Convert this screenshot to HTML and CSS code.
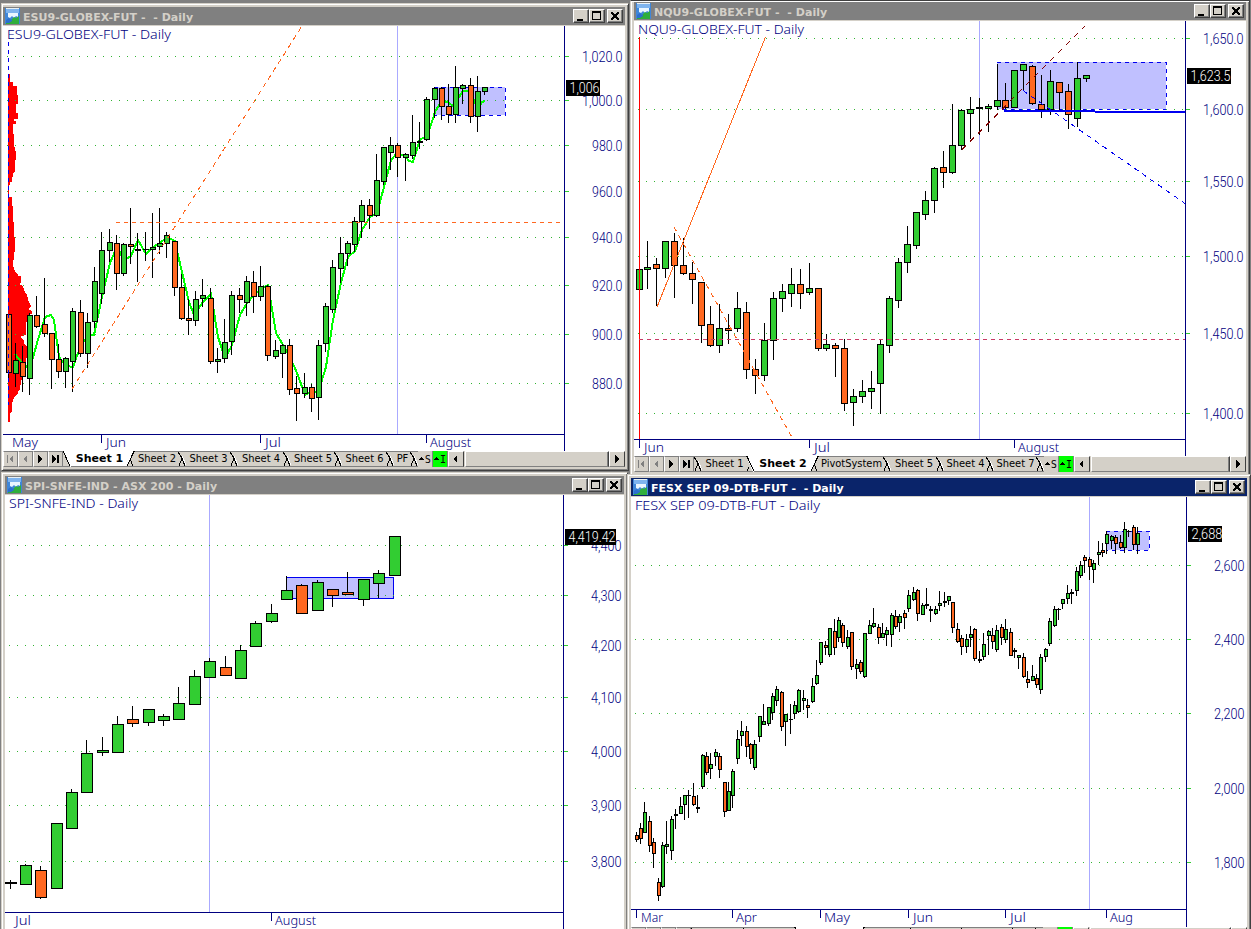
FILE: index.html
```
<!DOCTYPE html>
<html lang="en">
<head>
    <meta charset="UTF-8">
    <meta name="viewport" content="width=device-width, initial-scale=1.0">
    <title>Charts</title>
    <link rel="stylesheet" href="styles.css">
</head>
<body>
    <svg class="defs" width="0" height="0">
        <symbol id="chartIcon" viewBox="0 0 15 16">
            <rect x="0" y="0" width="15" height="16" fill="#3f86d8"/>
            <rect x="1" y="1" width="13" height="4" fill="#7fb4ee"/>
            <path d="M3 5H13V9L11 8L9 10L7 8L5 10L3 9Z" fill="#eaf6ff"/>
            <path d="M1 16V13L4 11L6 12L9 9L11 10L14 8V16Z" fill="#2fae3c"/>
            <path d="M1 12L4 10L6 12L7 11V13L4 15H1Z" fill="#2b6fd0"/>
            <path d="M1 0H14V1H1Z" fill="#e8f0f4"/>
        </symbol>
        <symbol id="minIcon" viewBox="0 0 12 10"><rect x="2" y="8" width="6" height="2"/></symbol>
        <symbol id="maxIcon" viewBox="0 0 12 10"><path d="M1 0H10V9H1ZM2 2V8H9V2Z" fill-rule="evenodd"/></symbol>
        <symbol id="closeIcon" viewBox="0 0 12 10"><path d="M2 1H4L6 3.4L8 1H10V2L7.2 5L10 8V9H8L6 6.6L4 9H2V8L4.8 5L2 2Z"/></symbol>
    </svg>

    <div class="window es">
        <div class="titleBar">
            <svg class="appIcon"><use href="#chartIcon"/></svg>
            <span class="title">ESU9-GLOBEX-FUT -  - Daily</span>
            <button><svg><use href="#minIcon"/></svg></button>
            <button><svg><use href="#maxIcon"/></svg></button>
            <button class="close"><svg><use href="#closeIcon"/></svg></button>
        </div>
        <svg class="chart" id="es"></svg>
        <div class="sheets" id="esSheets"></div>
    </div>

    <div class="window nq">
        <div class="titleBar">
            <svg class="appIcon"><use href="#chartIcon"/></svg>
            <span class="title">NQU9-GLOBEX-FUT -  - Daily</span>
            <button><svg><use href="#minIcon"/></svg></button>
            <button><svg><use href="#maxIcon"/></svg></button>
            <button class="close"><svg><use href="#closeIcon"/></svg></button>
        </div>
        <svg class="chart" id="nq"></svg>
        <div class="sheets" id="nqSheets"></div>
    </div>

    <div class="window spi">
        <div class="titleBar">
            <svg class="appIcon"><use href="#chartIcon"/></svg>
            <span class="title">SPI-SNFE-IND - ASX 200 - Daily</span>
            <button><svg><use href="#minIcon"/></svg></button>
            <button><svg><use href="#maxIcon"/></svg></button>
            <button class="close"><svg><use href="#closeIcon"/></svg></button>
        </div>
        <svg class="chart" id="spi"></svg>
    </div>

    <div class="window fesx active">
        <div class="titleBar">
            <svg class="appIcon"><use href="#chartIcon"/></svg>
            <span class="title">FESX SEP 09-DTB-FUT -  - Daily</span>
            <button><svg><use href="#minIcon"/></svg></button>
            <button><svg><use href="#maxIcon"/></svg></button>
            <button class="close"><svg><use href="#closeIcon"/></svg></button>
        </div>
        <svg class="chart" id="fesx"></svg>
        <div class="sheets" id="fesxSheets"></div>
    </div>

    <script src="charts.js"></script>
</body>
</html>
```
FILE: styles.css
```
body
{
    margin: 0;
    width: 1251px;
    height: 929px;
    position: relative;
    overflow: hidden;
    background: #808080;
    font-family: "DejaVu Sans Condensed", "DejaVu Sans", sans-serif;
    font-size: 11px;
}
.defs
{
    position: absolute;
}
.window
{
    position: absolute;
    box-sizing: border-box;
    display: flex;
    flex-direction: column;
    background: #d4d0c8;
    border: 1px solid;
    border-color: #d4d0c8 #404040 #404040 #d4d0c8;
    box-shadow: inset 1px 1px #fff, inset -1px -1px #808080;
    padding: 3px;
}
.es
{
    left: 1px;
    top: 3px;
    width: 628px;
    height: 468px;
    padding-left: 1px;
}
.nq
{
    left: 630px;
    top: 0;
    width: 620px;
    height: 476px;
    padding-top: 1px;
    border-top-color: #404040;
}
.spi
{
    left: 1px;
    top: 472px;
    width: 627px;
    height: 470px;
}
.fesx
{
    left: 627px;
    top: 474px;
    width: 624px;
    height: 473px;
}
.titleBar
{
    height: 18px;
    flex: none;
    display: flex;
    align-items: center;
    padding: 0 2px;
    background: #808080;
    color: #d4d0c8;
    border-bottom: 1px solid #d4d0c8;
}
.active .titleBar
{
    background: #0a246a;
    color: #fff;
}
.appIcon
{
    width: 15px;
    height: 16px;
    margin-right: 3px;
}
.title
{
    flex: 1;
    white-space: pre;
    font: bold 11px "DejaVu Sans", sans-serif;
    letter-spacing: 0.03px;
    position: relative;
    top: 1px;
}
button
{
    box-sizing: border-box;
    width: 16px;
    height: 14px;
    padding: 0;
    border: 1px solid;
    border-color: #fff #404040 #404040 #fff;
    box-shadow: inset -1px -1px #808080;
    background: #d4d0c8;
    display: flex;
    align-items: center;
    justify-content: center;
    border-radius: 0;
}
button svg
{
    width: 12px;
    height: 10px;
    shape-rendering: crispEdges;
}
.close
{
    margin-left: 2px;
}
.chart
{
    display: block;
    flex: none;
    background: #fff;
    shape-rendering: crispEdges;
}
.chart text
{
    font-family: "Noto Sans", sans-serif;
    font-weight: 300;
    font-size: 13.5px;
    fill: #000080;
}
.chart .price
{
    font-family: Roboto, sans-serif;
    font-size: 14.5px;
}
.chart .tagText
{
    fill: #fff;
}
.axis
{
    stroke: #000080;
}
.tick
{
    stroke: #32cd32;
}
.grid
{
    stroke: #32b432;
    stroke-dasharray: 1 7;
}
.cursor
{
    stroke: #aaaaff;
}
.zone
{
    fill: #c0c0ff;
}
.blue
{
    stroke: #0000f0;
    fill: none;
}
.orange
{
    stroke: #ff6820;
    fill: none;
}
.dash
{
    stroke-dasharray: 4 4;
}
.up
{
    fill: #32cd32;
    stroke: #000;
}
.down
{
    fill: #ff6820;
    stroke: #000;
}
.wick
{
    stroke: #000;
}
.average
{
    stroke: #00ff00;
    stroke-width: 2;
    fill: none;
}

/* sheet tabs under a chart */
.sheets
{
    height: 16px;
    flex: none;
    display: flex;
    overflow: hidden;
    background: #d4d0c8;
    color: #000;
}
.sheets svg
{
    display: block;
    flex: none;
    shape-rendering: crispEdges;
}
.nav
{
    box-sizing: border-box;
    width: 15px;
    height: 16px;
    flex: none;
    border: 1px solid;
    border-color: #808080 #808080 #808080 #fff;
}
.tab
{
    box-sizing: border-box;
    flex: none;
    height: 16px;
    line-height: 14px;
    padding-left: 1px;
    text-align: center;
    white-space: nowrap;
    border-top: 1px solid #808080;
    border-bottom: 1px solid #808080;
}
.tab.current
{
    background: #fff;
    border-top-color: #fff;
    font: bold 11px/14px "DejaVu Sans", sans-serif;
}
.mark
{
    box-sizing: border-box;
    flex: none;
    width: 15px;
    height: 16px;
    border-right: 1px solid #808080;
    font-size: 10px;
    line-height: 17px;
    display: flex;
}
.mark.on
{
    background: #00ff00;
    font-family: "DejaVu Sans Mono", monospace;
}
.arrow
{
    box-sizing: border-box;
    flex: none;
    width: 16px;
    height: 16px;
    border: 1px solid;
    border-color: #fff #404040 #808080 #fff;
}
.thumb
{
    box-sizing: border-box;
    flex: 1;
    border: 1px solid;
    border-color: #fff #404040 #808080 #fff;
    box-shadow: inset -1px 0 #808080;
    margin-left: 1px;
}
```
FILE: charts.js
```
// every chart keeps its own area: x, y, width, height
// candle rows: x high low top bottom type (G up, O down, K flat)
const charts = {
    es: {
        area: [3, 26, 622, 425],
        heading: ['ESU9-GLOBEX-FUT - Daily', 7, 39, 164],
        axisX: 564, axisY: 434, gridStart: 7, cursor: 397, right: 622.5, body: [2, 6],
        levels: [[56, '1,020.0'], [100, '1,000.0'], [145, '980.0'], [191, '960.0'], [237, '940.0'], [285, '920.0'], [334, '900.0'], [383, '880.0']],
        months: [['May', 12, 26], ['Jun', 106, 20, 101], ['Jul', 265, 16, 260], ['August', 430, 41, 426]],
        tag: ['1,006', 566, 80, 34, 30],
        zone: [434, 87, 71, 28, 'dash'],
        candles: `8 314 378 314 373 O,15 343 387 360 374 G,22 346 392 362 377 O,29 313 395 315 379 G,36 296 328 315 327 O,
44 278 337 324 334 O,51 333 389 333 360 O,58 344 378 359 372 O,65 357 388 358 372 G,72 308 392 311 362 G,
80 300 357 312 354 O,87 313 368 322 354 G,94 267 328 281 322 G,101 232 304 250 294 G,109 229 262 242 251 G,
116 235 290 243 274 O,123 243 276 244 274 G,130 208 264 244 247 O,137 233 282 249 251 K,145 232 261 249 250 K,
152 213 278 247 250 G,159 208 254 243 247 G,166 232 258 235 244 G,174 241 296 241 288 O,181 274 320 287 319 O,
188 299 335 318 321 O,195 291 326 299 321 G,202 279 307 295 299 G,210 288 364 298 362 O,217 348 373 359 362 G,
224 319 363 342 359 G,231 291 355 295 342 G,239 288 313 295 300 O,246 276 316 281 303 G,253 271 313 282 297 O,
260 266 301 286 297 G,267 285 361 286 356 O,275 340 359 350 357 G,282 344 378 345 354 G,289 339 395 345 390 O,
296 376 421 388 394 O,304 373 398 387 394 G,311 384 412 387 399 O,318 340 420 345 398 G,325 303 352 306 344 G,
332 260 313 267 310 G,340 237 283 253 269 G,347 241 266 243 254 G,354 217 252 221 245 G,361 200 238 205 222 G,
369 199 229 205 216 O,376 154 217 180 216 G,383 147 185 147 182 G,390 137 170 145 153 G,397 143 177 145 158 O,
405 153 181 154 158 G,412 115 159 142 156 G,419 122 149 141 143 K,426 97 141 99 140 G,434 87 118 88 100 G,
441 87 120 88 107 O,448 84 123 106 115 O,455 66 123 87 115 G,462 84 104 85 89 G,470 78 123 85 117 O,
477 76 132 91 117 G,484 87 95 87 92 G`
    },
    nq: {
        area: [634, 21, 612, 435],
        heading: ['NQU9-GLOBEX-FUT - Daily', 638, 34, 166],
        axisX: 1185, axisY: 439, gridStart: 638, cursor: 979, right: 1243.5, body: [3, 7],
        levels: [[38, '1,650.0'], [109, '1,600.0'], [181, '1,550.0'], [256, '1,500.0'], [333, '1,450.0'], [413, '1,400.0']],
        months: [['Jun', 644, 20, 639], ['Jul', 814, 16, 809], ['August', 1018, 41, 1014]],
        tag: ['1,623.5', 1187, 68, 44, 40],
        zone: [997, 62, 169, 47, 'dash'],
        candles: `639 269 290 269 290 G,647 241 289 267 270 G,656 258 306 264 269 O,665 241 278 241 269 G,674 233 298 241 266 O,
683 238 275 265 274 O,692 262 304 273 280 O,701 282 343 282 326 O,710 306 347 324 346 O,719 304 353 328 346 G,
728 314 344 328 331 O,737 292 332 308 329 G,746 302 379 312 370 O,755 359 394 369 376 O,764 323 381 340 376 G,
773 292 360 298 341 G,782 284 312 291 299 G,791 268 307 284 294 G,800 269 309 284 294 O,809 263 295 288 293 G,
818 288 351 288 349 O,826 334 351 344 349 G,835 343 377 345 349 O,844 339 411 348 404 O,853 389 426 396 403 G,
862 380 403 391 397 G,871 371 409 388 392 G,880 340 414 344 384 G,889 296 353 298 346 G,898 258 308 262 301 G,
907 226 273 244 263 G,916 212 249 212 246 G,925 191 220 200 215 G,934 167 213 168 201 G,943 151 188 167 173 O,
952 104 174 145 173 G,961 109 150 110 146 G,970 97 139 109 114 G,979 98 135 107 109 K,988 104 132 106 109 G,
997 64 110 100 107 G,1005 83 109 100 108 O,1014 70 108 70 108 G,1023 64 90 64 71 G,1032 65 105 66 104 O,
1041 75 118 104 110 O,1050 70 115 81 110 G,1059 82 110 82 93 O,1068 84 129 91 115 O,1077 62 127 78 119 G,
1086 75 82 75 79 G`
    },
    spi: {
        area: [5, 495, 619, 434],
        heading: ['SPI-SNFE-IND - Daily', 9, 508, 129],
        axisX: 563, axisY: 912, gridStart: 9, cursor: 209, right: 621.5, body: [5, 12],
        levels: [[545, '4,400'], [595, '4,300'], [645, '4,200'], [697, '4,100'], [751, '4,000'], [805, '3,900'], [861, '3,800']],
        months: [['Jul', 15, 16], ['August', 275, 41, 271]],
        tag: ['4,419.42', 565, 529, 51, 47],
        zone: [286, 577, 107, 21, ''],
        candles: `10 880 889 882 884 K,25 864 885 865 885 G,40 866 899 870 898 O,56 823 888 823 889 G,71 789 829 792 829 G,
86 740 793 753 793 G,102 737 756 750 753 G,117 716 753 724 753 G,132 706 727 719 724 O,148 709 726 709 723 G,
163 714 726 716 721 G,178 687 720 703 720 G,194 670 705 676 705 G,209 658 678 661 678 G,225 656 676 667 676 O,
240 645 679 650 679 G,255 621 647 623 647 G,271 604 623 613 622 G,286 576 600 590 600 G,301 584 614 585 614 O,
317 580 611 582 611 G,332 589 607 589 596 O,347 572 595 592 595 O,363 579 606 579 600 G,378 570 598 573 584 G,
394 536 576 536 576 G`
    },
    fesx: {
        area: [631, 497, 616, 430],
        heading: ['FESX SEP 09-DTB-FUT - Daily', 635, 510, 185],
        axisX: 1186, axisY: 909, gridStart: 635, cursor: 1089, right: 1244.5, body: [1, 4],
        levels: [[565, '2,600'], [639, '2,400'], [713, '2,200'], [788, '2,000'], [862, '1,800']],
        months: [['Mar', 641, 22, 636], ['Apr', 736, 21, 732], ['May', 824, 26, 820], ['Jun', 913, 20, 908], ['Jul', 1010, 16, 1005], ['Aug', 1110, 23, 1106]],
        tag: ['2,688', 1188, 526, 34, 31],
        zone: [1106, 531, 43, 19, 'dash'],
        candles: `636 832 842 835 840 O,640 823 844 828 839 O,644 802 833 812 833 G,649 816 852 821 846 O,653 838 868 842 854 O,
658 878 901 882 896 O,662 842 888 845 887 G,666 821 854 844 847 G,671 816 860 819 851 G,675 809 829 814 816 K,
680 797 814 806 814 G,684 795 820 795 805 G,688 790 818 795 796 K,693 783 806 796 805 O,697 795 813 807 809 K,
702 754 789 755 787 G,706 752 775 756 773 O,710 753 779 764 769 G,715 749 766 752 757 G,719 753 778 756 770 O,
724 782 817 782 812 O,728 782 811 791 811 G,732 769 808 771 796 G,737 730 764 739 759 G,741 721 746 731 736 G,
746 726 757 731 747 O,750 743 764 744 759 O,754 740 770 744 768 G,759 716 742 716 737 G,763 704 725 721 725 G,
768 707 726 707 724 G,772 693 720 696 713 G,776 686 706 689 701 G,781 691 731 692 727 O,785 714 746 714 722 G,
790 704 734 719 720 K,794 701 719 705 714 G,798 689 713 690 712 G,803 690 710 698 701 G,807 699 718 705 708 O,
812 678 703 686 702 G,816 660 685 675 684 G,820 642 665 642 663 G,825 641 655 645 648 O,829 628 657 628 655 G,
834 619 655 631 648 O,838 617 642 620 638 G,842 623 647 625 643 O,847 630 649 637 647 G,851 632 670 632 667 O,
856 659 679 664 669 G,860 660 674 662 672 O,864 633 678 633 677 G,869 620 634 625 634 G,873 608 628 623 627 G,
878 624 644 627 638 O,882 623 638 633 638 G,886 627 646 630 635 G,891 613 647 615 635 G,895 610 629 616 627 O,
899 614 632 616 623 G,904 610 629 613 618 O,908 590 612 595 609 G,913 587 601 592 600 G,917 589 621 590 614 O,
922 603 615 605 615 G,926 588 609 604 606 K,930 606 622 609 611 K,935 606 615 609 614 G,939 591 611 603 606 G,
944 592 607 601 603 K,948 596 605 596 601 G,952 602 633 602 628 O,957 623 643 629 642 O,961 635 655 638 647 O,
966 634 653 639 647 G,970 626 647 634 638 G,974 628 661 629 659 O,979 651 663 659 661 K,983 633 660 644 657 G,
988 630 655 631 636 G,992 628 649 635 642 O,996 625 652 630 650 G,1001 624 645 627 638 O,1005 619 643 629 640 G,
1010 628 656 632 656 O,1014 648 658 650 652 K,1018 655 669 655 658 G,1023 653 678 657 677 O,1027 671 688 679 683 O,
1032 665 681 676 681 G,1036 674 688 678 685 O,1040 654 694 657 690 G,1045 648 662 649 657 G,1049 618 646 621 644 G,
1054 606 627 609 626 G,1058 608 620 609 610 K,1062 599 609 599 604 G,1067 585 604 593 599 G,1071 589 604 592 594 K,
1076 567 596 571 591 G,1080 561 578 565 576 G,1084 555 573 557 561 O,1089 557 580 559 567 O,1093 560 583 563 570 G,
1098 541 565 552 555 G,1102 543 557 550 553 O,1106 531 554 534 544 G,1111 535 549 536 541 G,1115 535 554 537 544 O,
1120 535 549 542 548 O,1124 522 553 529 548 G,1128 530 537 531 532 K,1133 525 550 527 545 O,1137 527 554 533 545 G`
    }
};

// volume profile on the left side of the ES chart
const profile = '8,74 10,74 10,82 13,82 13,86 17,86 17,95 18,95 18,104 16,104 16,113 18,113 18,119 14,119 14,121 16,121 16,124 13,124 13,134 14,134 14,147 15,147 15,151 16,151 16,160 15,160 15,171 13,173 13,177 12,177 12,182 10,182 10,185 9,185 9,197 12,197 12,206 13,206 13,222 14,222 14,237 15,237 15,252 14,252 14,258 13,262 13,265 15,272 18,274 18,276 21,276 21,283 20,283 20,285 23,286 24,290 27,295 28,299 29,302 31,306 28,309 32,311 32,314 27,315 27,322 26,322 26,335 21,336 21,338 24,340 24,344 27,346 27,356 26,360 26,366 25,374 23,378 21,380 20,390 18,391 18,394 15,396 14,398 12,404 12,412 10,413 10,422 8,422';
const average = '15,354 22,363 27,367 33,358 37,343 45,317 51,315 54,320 59,357 66,366 73,367 81,345 88,336 94,335 102,297 110,263 117,247 124,260 131,256 138,240 146,254 153,247 160,243 167,237 175,241 178,255 189,302 194,315 203,302 211,294 218,337 225,358 232,345 240,315 247,303 254,295 261,289 268,285 276,333 283,345 290,357 297,373 305,395 312,391 318,393 326,367 333,320 341,283 348,257 355,251 362,230 370,217 377,213 384,187 391,160 397,153 405,156 409,161 413,162 420,139 427,137 435,112 442,100 449,103 453,106 463,91 470,91 478,110 482,102 485,101';

function line(x1, y1, x2, y2, cls, extra)
{
    return `<line x1="${x1}" y1="${y1}" x2="${x2}" y2="${y2}" class="${cls}" ${extra || ''}/>`;
}

function text(str, x, y, w, cls, anchor)
{
    return `<text x="${x}" y="${y}" textLength="${w}" lengthAdjust="spacingAndGlyphs" class="${cls || ''}" text-anchor="${anchor || 'start'}">${str}</text>`;
}

function priceWidth(str)
{
    return { 5: 30.5, 7: 40.5 }[str.length];
}

// lines which belong to only one chart
const under = {
    es: `<polygon points="${profile}" fill="#f00"/>`
};
const over = {
    es: line(8.5, 42, 8.5, 405, 'blue dash') +
        line(116, 222.5, 561, 222.5, 'orange dash') +
        line(72, 389, 302, 26, 'orange', 'stroke-dasharray="5 4.4"'),
    nq: line(639.5, 37, 639.5, 439, '', 'stroke="#f00"') +
        line(639, 339.5, 1185, 339.5, 'dash', 'stroke="#c83c64"') +
        line(657, 307, 765.5, 37, 'orange') +
        line(674, 227, 793, 439, 'orange', 'stroke-dasharray="5 4.4"') +
        line(962, 149.5, 1085, 26, '', 'stroke="#800000" stroke-dasharray="5.6 5.7"') +
        line(1023, 90.5, 1185, 203.5, 'blue', 'stroke-dasharray="5 4.7"') +
        line(1004, 111, 1095, 111, 'blue', 'stroke-width="2"') +
        line(1095, 112, 1185, 112, 'blue', 'stroke-width="2"')
};

function drawCandles(c)
{
    let out = '';
    for (const row of c.candles.split(','))
    {
        const p = row.trim().split(' ');
        const [x, high, low, top, bottom] = p.map(Number);
        const left = x - c.body[0];
        const w = c.body[1];
        out += line(x + .5, high, x + .5, low, 'wick');
        if (p[5] === 'K')
        {
            out += `<rect x="${left}" y="${top}" width="${w}" height="${bottom - top}"/>`;
        }
        else
        {
            out += `<rect x="${left + .5}" y="${top + .5}" width="${w - 1}" height="${bottom - top - 1}" class="${p[5] === 'G' ? 'up' : 'down'}"/>`;
        }
    }
    return out;
}

function drawChart(id)
{
    const c = charts[id];
    const [ax, ay, aw, ah] = c.area;
    const [zx, zy, zw, zh, zdash] = c.zone;
    let out = under[id] || '';
    out += line(c.cursor + .5, ay, c.cursor + .5, c.axisY, 'cursor');
    out += `<rect x="${zx}" y="${zy}" width="${zw}" height="${zh}" class="zone"/>`;
    out += `<path d="M${zx} ${zy + .5}H${zx + zw + .5}V${zy + zh + .5}H${zx}" class="blue ${zdash}"/>`;
    for (const [y, label] of c.levels)
    {
        out += line(c.gridStart, y + .5, c.axisX, y + .5, 'grid');
        out += line(c.axisX + 1, y + .5, c.axisX + 5, y + .5, 'tick');
        out += text(label, c.right, y + 5.5, priceWidth(label), 'price', 'end');
    }
    if (id === 'es')
    {
        out += `<polyline points="${average}" class="average"/>`;
    }
    out += drawCandles(c);
    out += over[id] || '';
    out += line(ax, c.axisY + .5, c.axisX, c.axisY + .5, 'axis');
    out += line(c.axisX + .5, ay, c.axisX + .5, ay + ah, 'axis');
    for (const [name, x, w, tick] of c.months)
    {
        if (tick)
        {
            out += line(tick + .5, c.axisY, tick + .5, c.axisY + 9, 'axis');
        }
        out += text(name, x, c.axisY + 13, w);
    }
    const [value, tx, ty, tw, len] = c.tag;
    out += `<rect x="${tx}" y="${ty}" width="${tw}" height="16"/>`;
    out += text(value, tx + 3.5, ty + 13, len, 'price tagText');
    out += text(...c.heading);

    const svg = document.getElementById(id);
    svg.setAttribute('viewBox', c.area.join(' '));
    svg.setAttribute('width', aw);
    svg.setAttribute('height', ah);
    svg.innerHTML = out;
}

// sheet tabs: [name, width], the divider after a tab is 8px wide
const sheets = {
    esSheets: { current: 0, tabs: [['Sheet 1', 56], ['Sheet 2', 43], ['Sheet 3', 44], ['Sheet 4', 45], ['Sheet 5', 43], ['Sheet 6', 44], ['PF', 16]] },
    nqSheets: { current: 1, tabs: [['Sheet 1', 44], ['Sheet 2', 57], ['PivotSystem', 64], ['Sheet 5', 45], ['Sheet 4', 42], ['Sheet 7', 42]] },
    fesxSheets: { current: 2, tabs: [['', 44], ['', 43], ['', 55], ['', 45], ['', 43], ['', 43], ['', 15]] }
};

function divider(kind)
{
    const shapes = {
        first: '<path d="M0 0H8V16H7Z" fill="#fff"/><path d="M0 0L7 15" stroke="#000"/>',
        start: '<path d="M0 0H8V16H7Z" fill="#fff"/><path d="M0 .5H1L8 15M3 11L1 15" stroke="#000"/>',
        end: '<path d="M0 0H7L0 16Z" fill="#fff"/><path d="M8 .5H7L0 15M3 8L6 15" stroke="#000"/>',
        plain: '<path d="M4 5L8 14" stroke="#fff"/><path d="M0 1L4 7L1 15M3 5L7 15" stroke="#000"/>'
    };
    return `<svg width="8" height="16" fill="none"><path d="M0 .5H8M0 15.5H8" stroke="#808080"/>${shapes[kind]}</svg>`;
}

function drawSheets(id)
{
    const s = sheets[id];
    const arrows = [
        '<path d="M5 4V12H4V4ZM10 4V12L6 8Z" fill="#808080"/>',
        '<path d="M9 4V12L5 8Z" fill="#808080"/>',
        '<path d="M5 4V12L9 8Z"/>',
        '<path d="M4 4V12L8 8ZM9 4H11V12H9Z"/>'
    ];
    let out = arrows.map(a => `<div class="nav"><svg width="13" height="14" viewBox="1 1 13 14">${a}</svg></div>`).join('');
    out += divider(s.current === 0 ? 'first' : 'plain');
    s.tabs.forEach(([name, w], i) => {
        out += `<div class="tab ${i === s.current ? 'current' : ''}" style="width:${w}px">${name}</div>`;
        out += divider(i === s.current ? 'end' : i + 1 === s.current ? 'start' : 'plain');
    });
    const tri = '<svg width="7" height="16"><path d="M1 9L3.5 5.5L6 9Z"/></svg>';
    out += `<div class="mark">${tri}S</div><div class="mark on">${tri}I</div>`;
    out += '<div class="arrow"><svg width="14" height="14"><path d="M8 3V11L4 7Z"/></svg></div>';
    out += '<div class="thumb"></div>';
    out += '<div class="arrow"><svg width="14" height="14"><path d="M5 3V11L9 7Z"/></svg></div>';
    document.getElementById(id).innerHTML = out;
}

Object.keys(charts).forEach(drawChart);
Object.keys(sheets).forEach(drawSheets);
```
